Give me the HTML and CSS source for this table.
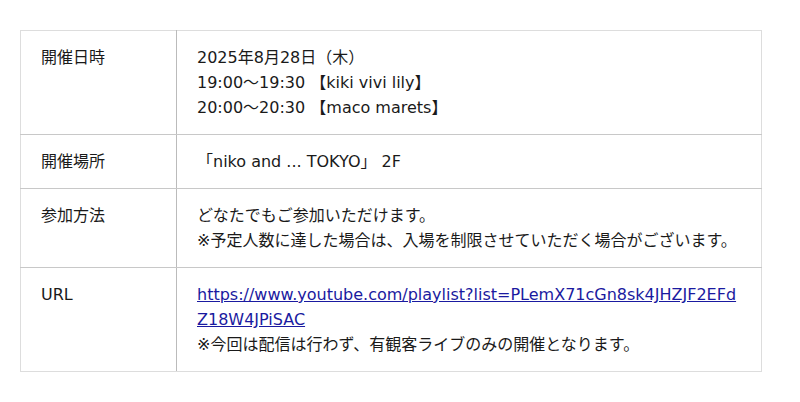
FILE: index.html
```html
<!DOCTYPE html>
<html lang="ja">
<head>
<meta charset="utf-8">
<link rel="stylesheet" href="styles.css">
</head>
<body>
<table class="info">
  <tr>
    <th>開催日時</th>
    <td>2025年8月28日（木）<br>19:00～19:30 【kiki vivi lily】<br>20:00～20:30 【maco marets】</td>
  </tr>
  <tr>
    <th>開催場所</th>
    <td>「niko and ... TOKYO」 2F</td>
  </tr>
  <tr>
    <th>参加方法</th>
    <td>どなたでもご参加いただけます。<br>※予定人数に達した場合は、入場を制限させていただく場合がございます。</td>
  </tr>
  <tr>
    <th>URL</th>
    <td><a class="link" href="#">https://www.youtube.com/playlist?list=PLemX71cGn8sk4JHZJF2EFdZ18W4JPiSAC</a><br>※今回は配信は行わず、有観客ライブのみの開催となります。</td>
  </tr>
</table>
</body>
</html>
```
FILE: styles.css
```css
html, body {
  margin: 0;
  padding: 0;
  background: #fff;
}
body {
  padding: 30px 0 0 20px;
  font-family: "DejaVu Sans", "Noto Sans CJK JP", sans-serif;
  font-size: 16px;
  line-height: 25px;
  color: #1a1a1a;
}
.info {
  width: 742px;
  border-collapse: collapse;
  border: 1px solid #ddd;
  table-layout: fixed;
}
.info th, .info td {
  padding: 14px 20px;
  vertical-align: top;
  text-align: left;
  font-weight: normal;
  border-bottom: 1px solid #c8c8c8;
}
.info tr:last-child th, .info tr:last-child td {
  border-bottom: 1px solid #ddd;
}
.info th {
  width: 115px;
  border-right: 1px solid #bbb;
}
.link {
  color: #1a1aa0;
  text-decoration: underline;
  word-break: break-all;
}
```
